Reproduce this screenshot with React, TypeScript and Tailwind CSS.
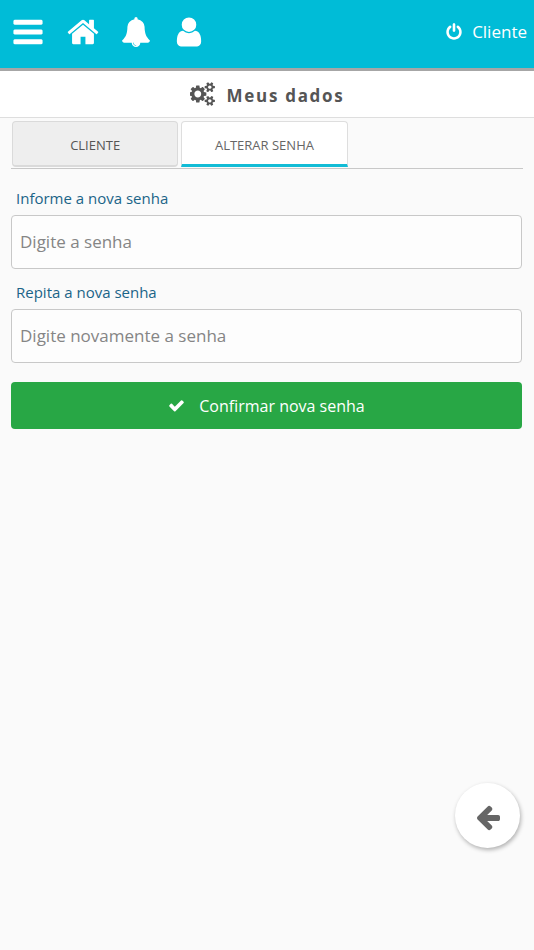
import { useState } from 'react'
import type { FormEvent } from 'react'

type IconProps = {
  path: string
  className: string
  viewBox?: string
}

const icons = {
  bars: 'M1664 1344v128q0 26-19 45t-45 19h-1408q-26 0-45-19t-19-45v-128q0-26 19-45t45-19h1408q26 0 45 19t19 45zm0-512v128q0 26-19 45t-45 19h-1408q-26 0-45-19t-19-45v-128q0-26 19-45t45-19h1408q26 0 45 19t19 45zm0-512v128q0 26-19 45t-45 19h-1408q-26 0-45-19t-19-45v-128q0-26 19-45t45-19h1408q26 0 45 19t19 45z',
  home: 'M1472 992v480q0 26-19 45t-45 19h-384v-384h-256v384h-384q-26 0-45-19t-19-45v-480q0-1 .5-3t.5-3l575-474 575 474q1 2 1 6zm223-69l-62 74q-8 9-21 11h-3q-13 0-21-7l-692-577-692 577q-12 8-24 7-13-2-21-11l-62-74q-8-10-7-23.5t11-21.5l719-599q32-26 76-26t76 26l244 204v-195q0-14 9-23t23-9h192q14 0 23 9t9 23v408l219 182q10 8 11 21.5t-7 23.5z',
  bell: 'M912 1696q0-16-16-16-59 0-101.5-42.5t-42.5-101.5q0-16-16-16t-16 16q0 73 51.5 124.5t124.5 51.5q16 0 16-16zm816-288q0 52-38 90t-90 38h-448q0 106-75 181t-181 75-181-75-75-181h-448q-52 0-90-38t-38-90q50-42 91-88t85-119.5 74.5-158.5 50-206 19.5-260q0-152 117-282.5t307-158.5q-8-19-8-39 0-40 28-68t68-28 68 28 28 68q0 20-8 39 190 28 307 158.5t117 282.5q0 139 19.5 260t50 206 74.5 158.5 85 119.5 91 88z',
  user: 'M1536 1399q0 109-62.5 187t-150.5 78h-854q-88 0-150.5-78t-62.5-187q0-85 8.5-160.5t31.5-152 58.5-131 94-89 134.5-34.5q131 128 313 128t313-128q76 0 134.5 34.5t94 89 58.5 131 31.5 152 8.5 160.5zm-256-887q0 159-112.5 271.5t-271.5 112.5-271.5-112.5-112.5-271.5 112.5-271.5 271.5-112.5 271.5 112.5 112.5 271.5z',
  power: 'M1664 896q0 156-61 298t-164 245-245 164-298 61-298-61-245-164-164-245-61-298q0-182 80.5-343t226.5-270q43-32 95.5-25t83.5 50q32 42 24.5 94.5t-49.5 84.5q-98 74-151.5 181t-53.5 228q0 104 40.5 198.5t109.5 163.5 163.5 109.5 198.5 40.5 198.5-40.5 163.5-109.5 109.5-163.5 40.5-198.5q0-121-53.5-228t-151.5-181q-42-32-49.5-84.5t24.5-94.5q31-43 84-50t95 25q146 109 226.5 270t80.5 343zm-640-768v640q0 52-38 90t-90 38-90-38-38-90v-640q0-52 38-90t90-38 90 38 38 90z',
  cogs: 'M832 896q0-106-75-181t-181-75-181 75-75 181 75 181 181 75 181-75 75-181zm768 512q0-52-38-90t-90-38-90 38-38 90q0 53 37.5 90.5t90.5 37.5 90.5-37.5 37.5-90.5zm0-1024q0-52-38-90t-90-38-90 38-38 90q0 53 37.5 90.5t90.5 37.5 90.5-37.5 37.5-90.5zm-384 421v185q0 10-7 19.5t-16 10.5l-155 24q-11 35-32 76 34 48 90 115 7 11 7 20 0 12-7 19-23 30-82.5 89.5t-78.5 59.5q-11 0-21-7l-115-90q-37 19-77 31-11 108-23 155-7 24-30 24h-186q-11 0-20-7.5t-10-17.5l-23-153q-34-10-75-31l-118 89q-7 7-20 7-11 0-21-8-144-133-144-160 0-9 7-19 10-14 41-53t47-61q-23-44-35-82l-152-24q-10-1-17-9.5t-7-19.5v-185q0-10 7-19.5t16-10.5l155-24q11-35 32-76-34-48-90-115-7-11-7-20 0-12 7-20 22-30 82-89t79-59q11 0 21 7l115 90q34-18 77-32 11-108 23-154 7-24 30-24h186q11 0 20 7.5t10 17.5l23 153q34 10 75 31l118-89q8-7 20-7 11 0 21 8 144 133 144 160 0 8-7 19-12 16-42 54t-45 60q23 48 34 82l152 23q10 2 17 10.5t7 19.5zm640 533v140q0 16-149 31-12 27-30 52 51 113 51 138 0 4-4 7-122 71-124 71-8 0-46-47t-52-68q-20 2-30 2t-30-2q-14 21-52 68t-46 47q-2 0-124-71-4-3-4-7 0-25 51-138-18-25-30-52-149-15-149-31v-140q0-16 149-31 13-29 30-52-51-113-51-138 0-4 4-7 4-2 35-20t59-34 30-16q8 0 46 46.5t52 67.5q20-2 30-2t30 2q51-71 92-112l6-2q4 0 124 70 4 3 4 7 0 25-51 138 17 23 30 52 149 15 149 31zm0-1024v140q0 16-149 31-12 27-30 52 51 113 51 138 0 4-4 7-122 71-124 71-8 0-46-47t-52-68q-20 2-30 2t-30-2q-14 21-52 68t-46 47q-2 0-124-71-4-3-4-7 0-25 51-138-18-25-30-52-149-15-149-31v-140q0-16 149-31 13-29 30-52-51-113-51-138 0-4 4-7 4-2 35-20t59-34 30-16q8 0 46 46.5t52 67.5q20-2 30-2t30 2q51-71 92-112l6-2q4 0 124 70 4 3 4 7 0 25-51 138 17 23 30 52 149 15 149 31z',
  check: 'M1671 566q0 40-28 68l-724 724-136 136q-28 28-68 28t-68-28l-136-136-362-362q-28-28-28-68t28-68l136-136q28-28 68-28t68 28l294 295 656-657q28-28 68-28t68 28l136 136q28 28 28 68z',
  arrowLeft: 'M1664 896v128q0 53-32.5 90.5t-84.5 37.5h-704l293 294q38 36 38 90t-38 90l-75 76q-37 37-90 37-52 0-91-37l-651-652q-37-37-37-90 0-52 37-91l651-650q38-38 91-38 52 0 90 38l75 74q38 38 38 91t-38 91l-293 293h704q52 0 84.5 37.5t32.5 90.5z',
}

function Icon({ path, className, viewBox = '0 0 1792 1792' }: IconProps) {
  return (
    <svg viewBox={viewBox} className={className} fill="currentColor" aria-hidden="true">
      <path d={path} />
    </svg>
  )
}

function PasswordField({
  id,
  label,
  placeholder,
  value,
  onChange,
}: {
  id: string
  label: string
  placeholder: string
  value: string
  onChange: (value: string) => void
}) {
  return (
    <div>
      <label htmlFor={id} className="block px-[5px] pb-[5px] text-[15px] leading-6 text-[#1b6488]">
        {label}
      </label>
      <input
        id={id}
        type="password"
        value={value}
        onChange={(e) => onChange(e.target.value)}
        placeholder={placeholder}
        className="block h-[54px] w-full rounded border border-[#c8c8c8] bg-[#fdfdfd] px-2 pb-[2px] text-[17px] text-gray-700 outline-none placeholder:text-[#858585] focus:border-[#00bcd7]"
      />
    </div>
  )
}

const tabs = [
  { id: 'cliente', label: 'CLIENTE' },
  { id: 'senha', label: 'ALTERAR SENHA' },
]

export default function App() {
  const [tab, setTab] = useState('senha')
  const [senha, setSenha] = useState('')
  const [repetir, setRepetir] = useState('')

  function confirmar(e: FormEvent) {
    e.preventDefault()

    if (!senha || senha !== repetir) {
      alert('As senhas não conferem')
      return
    }

    setSenha('')
    setRepetir('')
  }

  return (
    <div className="min-h-screen bg-[#fafafa] font-['Open_Sans','Noto_Sans',sans-serif]">
      <header className="flex h-[71px] items-center justify-between border-b-3 border-[#a6a6a6] bg-[#00bcd7] pr-[7px] pb-1 pl-[11px] text-white">
        <nav className="flex items-center gap-[21px]">
          <button type="button" aria-label="Menu">
            <Icon path={icons.bars} className="size-[34px]" />
          </button>
          <a href="#inicio" aria-label="Início">
            <Icon path={icons.home} className="size-[34px]" />
          </a>
          <a href="#avisos" aria-label="Avisos">
            <Icon path={icons.bell} className="size-[30px]" />
          </a>
          <a href="#perfil" aria-label="Perfil">
            <Icon path={icons.user} className="size-[34px]" />
          </a>
        </nav>
        <a href="#sair" className="flex items-center gap-[9px] text-[17px] leading-6">
          <Icon path={icons.power} className="size-[18px]" />
          Cliente
        </a>
      </header>

      <div className="flex h-[47px] items-center justify-center gap-3 border-b border-[#dedede] bg-white text-[#555]">
        <Icon path={icons.cogs} viewBox="0 0 1856 1792" className="h-[24px] w-[25px]" />
        <h1 className="pt-[3px] text-[17px] leading-6 font-bold tracking-widest">Meus dados</h1>
      </div>

      <main className="px-[11px] pt-[3px]">
        <div role="tablist" className="flex gap-[3px] border-b border-[#c8c8c8] px-px pb-px">
          {tabs.map((t) => (
            <button
              key={t.id}
              type="button"
              role="tab"
              aria-selected={tab === t.id}
              onClick={() => setTab(t.id)}
              className={
                tab === t.id
                  ? 'h-[46px] w-[calc(33%-2px)] rounded-t border border-b-3 border-[#dedede] border-b-[#12bcd6] bg-white pt-[5px] text-[13px] text-[#666]'
                  : 'h-[46px] w-[calc(33%-2px)] rounded border border-b-2 border-[#dadada] bg-[#eee] pt-1 text-[13px] text-[#555]'
              }
            >
              {t.label}
            </button>
          ))}
        </div>

        <form onSubmit={confirmar} className="pt-[17px] pr-px">
          <div className="space-y-[11px]">
            <PasswordField
              id="senha"
              label="Informe a nova senha"
              placeholder="Digite a senha"
              value={senha}
              onChange={setSenha}
            />
            <PasswordField
              id="repetir"
              label="Repita a nova senha"
              placeholder="Digite novamente a senha"
              value={repetir}
              onChange={setRepetir}
            />
          </div>
          <button
            type="submit"
            className="mt-[19px] flex h-[47px] w-full items-center justify-center gap-[14px] rounded bg-[#28a745] text-[16px] text-white"
          >
            <Icon path={icons.check} className="size-[17px]" />
            Confirmar nova senha
          </button>
        </form>
      </main>

      <button
        type="button"
        aria-label="Voltar"
        className="fixed right-[14px] bottom-[102px] flex size-[65px] items-center justify-center rounded-full bg-white pt-[2px] text-[#666] shadow-[1px_2px_4px_rgba(0,0,0,0.3)]"
      >
        <Icon path={icons.arrowLeft} className="size-[28px]" />
      </button>
    </div>
  )
}
